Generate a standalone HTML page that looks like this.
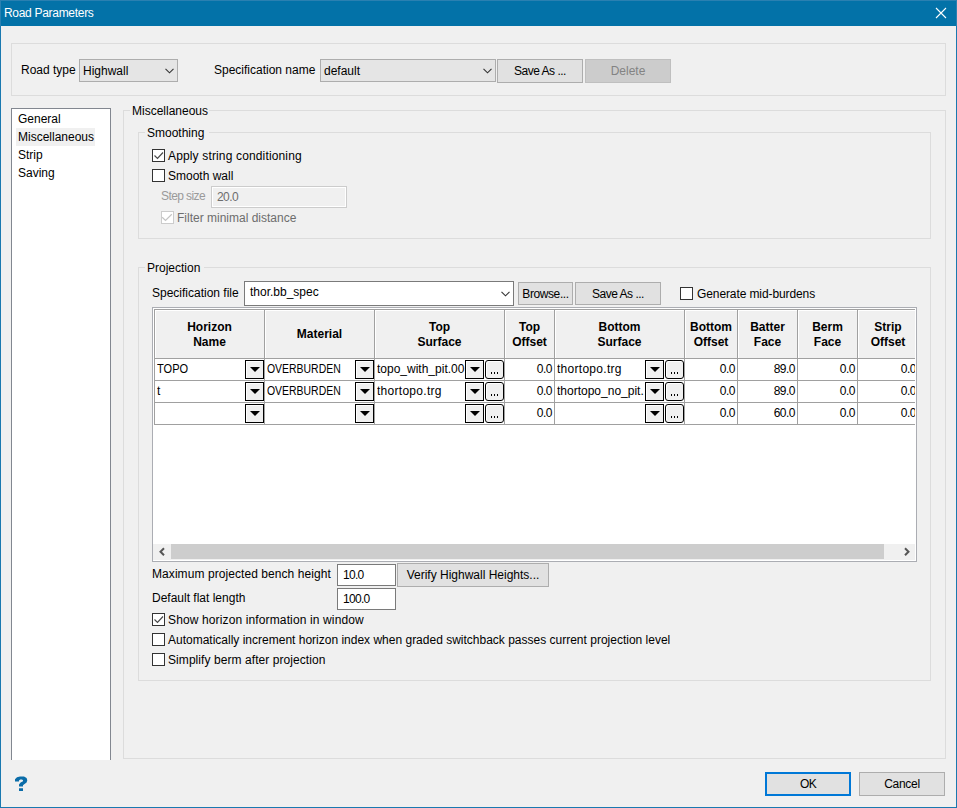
<!DOCTYPE html>
<html><head><meta charset="utf-8">
<style>
html,body{margin:0;padding:0;width:957px;height:808px;overflow:hidden;background:#f0f0f0;}
body{position:relative;font-family:"Liberation Sans",sans-serif;font-size:12px;color:#000;}
div{box-sizing:border-box;}
.a{position:absolute;}
.t{position:absolute;font-size:12px;line-height:15px;white-space:pre;}
.b{position:absolute;font-size:12px;line-height:15px;white-space:pre;font-weight:bold;}
.grp{position:absolute;border:1px solid #dcdcdc;}
.lbl{position:absolute;background:#f0f0f0;font-size:12px;line-height:15px;white-space:pre;padding:0 1px 0 2px;}
.btn{position:absolute;background:#e1e1e1;border:1px solid #adadad;font-size:12px;line-height:15px;text-align:center;white-space:pre;}
.chk{position:absolute;width:13px;height:13px;border:1px solid #333;background:#fff;}
.edit{position:absolute;background:#fff;border:1px solid #7a7a7a;}
.dd{position:absolute;width:19px;height:19px;border:1px solid #000;background:#f0f0f0;box-shadow:inset 1px 1px 0 #fff;}
.dd:after{content:"";position:absolute;left:4px;top:6px;border-left:5px solid transparent;border-right:5px solid transparent;border-top:5px solid #000;}
.br{position:absolute;width:19px;height:19px;border:1px solid #000;border-radius:3px;background:#f0f0f0;box-shadow:inset 1px 1px 0 #fff;}
.br:after{content:"";position:absolute;left:5px;top:11px;width:1px;height:2px;background:#000;box-shadow:3px 0 0 #000,6px 0 0 #000;}
</style></head>
<body>
<!-- window frame -->
<div class="a" style="left:0;top:0;width:957px;height:808px;border:1px solid #1a79b0;border-top:none;"></div>
<div class="a" style="left:0;top:0;width:957px;height:26px;background:#0372a8;border:1px solid #2a80b1;border-bottom:none;"></div>
<div class="t" style="left:4px;top:6px;color:#fff;letter-spacing:-0.3px;">Road Parameters</div>
<svg class="a" style="left:935px;top:7px" width="12" height="12" viewBox="0 0 12 12"><path d="M1 1L11 11M11 1L1 11" stroke="#fff" stroke-width="1.1"/></svg>

<!-- top group -->
<div class="grp" style="left:11px;top:43px;width:935px;height:53px;"></div>
<div class="t" style="left:21px;top:63px;">Road type</div>
<div class="a" style="left:79px;top:59px;width:99px;height:23px;background:#e5e5e5;border:1px solid #adadad;"></div>
<div class="t" style="left:83px;top:64px;">Highwall</div>
<svg class="a" style="left:165px;top:68px" width="9" height="6" viewBox="0 0 9 6"><path d="M0.5 0.8L4.5 4.8L8.5 0.8" stroke="#333" stroke-width="1.1" fill="none"/></svg>
<div class="t" style="left:214px;top:63px;">Specification name</div>
<div class="a" style="left:320px;top:59px;width:176px;height:23px;background:#e5e5e5;border:1px solid #adadad;"></div>
<div class="t" style="left:324px;top:64px;">default</div>
<svg class="a" style="left:483px;top:68px" width="9" height="6" viewBox="0 0 9 6"><path d="M0.5 0.8L4.5 4.8L8.5 0.8" stroke="#333" stroke-width="1.1" fill="none"/></svg>
<div class="btn" style="left:497px;top:59px;width:86px;height:24px;padding-top:4px;letter-spacing:-0.5px;">Save As ...</div>
<div class="btn" style="left:585px;top:59px;width:86px;height:24px;padding-top:4px;background:#cccccc;border-color:#bfbfbf;color:#838383;">Delete</div>

<!-- listbox -->
<div class="a" style="left:11px;top:108px;width:100px;height:652px;background:#fff;border:1px solid #828790;border-bottom:none;"></div>
<div class="a" style="left:16px;top:128px;width:79px;height:18px;background:#f0f0f0;"></div>
<div class="t" style="left:18px;top:112px;">General</div>
<div class="t" style="left:18px;top:130px;">Miscellaneous</div>
<div class="t" style="left:18px;top:148px;">Strip</div>
<div class="t" style="left:18px;top:166px;">Saving</div>

<!-- misc group -->
<div class="grp" style="left:123px;top:110px;width:823px;height:649px;"></div>
<div class="lbl" style="left:130px;top:104px;width:79px;">Miscellaneous</div>

<!-- smoothing group -->
<div class="grp" style="left:138px;top:132px;width:793px;height:107px;"></div>
<div class="lbl" style="left:145px;top:126px;width:64px;">Smoothing</div>

<!-- projection group -->
<div class="grp" style="left:138px;top:267px;width:793px;height:414px;"></div>
<div class="lbl" style="left:145px;top:261px;width:59px;">Projection</div>


<!-- smoothing content -->
<div class="chk" style="left:152px;top:149px;"></div>
<svg class="a" style="left:152px;top:149px" width="13" height="13" viewBox="0 0 13 13"><path d="M2.5 6.5L5.5 9.5L11 3.5" stroke="#4a4a4a" stroke-width="1.2" fill="none"/></svg>
<div class="t" style="left:168px;top:149px;letter-spacing:0.15px;">Apply string conditioning</div>
<div class="chk" style="left:152px;top:169px;"></div>
<div class="t" style="left:168px;top:169px;">Smooth wall</div>
<div class="t" style="left:161px;top:189px;color:#9a9a9a;letter-spacing:-0.6px;">Step size</div>
<div class="a" style="left:211px;top:186px;width:136px;height:22px;border:1px solid #cccccc;box-shadow:inset 0 0 0 1px #fff;"></div>
<div class="t" style="left:217px;top:190px;color:#6d6d6d;letter-spacing:-0.6px;">20.0</div>
<div class="a" style="left:161px;top:211px;width:13px;height:13px;border:1px solid #cccccc;background:#fff;"></div>
<svg class="a" style="left:161px;top:211px" width="13" height="13" viewBox="0 0 13 13"><path d="M1.2 6.3L4.5 9.4L10.8 3.2" stroke="#c4c4c4" stroke-width="1.2" fill="none"/></svg>
<div class="t" style="left:177px;top:211px;color:#6d6d6d;">Filter minimal distance</div>

<!-- projection content -->
<div class="t" style="left:152px;top:286px;">Specification file</div>
<div class="edit" style="left:244px;top:281px;width:270px;height:25px;"></div>
<div class="t" style="left:250px;top:285px;">thor.bb_spec</div>
<svg class="a" style="left:501px;top:291px" width="9" height="6" viewBox="0 0 9 6"><path d="M0.5 0.8L4.5 4.8L8.5 0.8" stroke="#333" stroke-width="1.1" fill="none"/></svg>
<div class="btn" style="left:518px;top:282px;width:55px;height:23px;padding-top:4px;letter-spacing:-0.4px;">Browse...</div>
<div class="btn" style="left:575px;top:282px;width:86px;height:23px;padding-top:4px;letter-spacing:-0.5px;">Save As ...</div>
<div class="chk" style="left:680px;top:287px;"></div>
<div class="t" style="left:697px;top:287px;letter-spacing:-0.1px;">Generate mid-burdens</div>

<!-- table -->
<div class="a" style="left:152px;top:307px;width:765px;height:255px;border:1px solid #abadb3;background:#fff;"></div>
<div class="a" style="left:153px;top:308px;width:762px;height:252px;overflow:hidden;">
<div class="a" style="left:1px;top:1px;width:765px;height:50px;background:#f0f0f0;border-top:1px solid #a0a0a0;border-left:1px solid #a0a0a0;border-bottom:1px solid #a0a0a0;"></div>
<div class="a" style="left:2px;top:2px;width:109px;height:1px;background:#fff;"></div>
<div class="a" style="left:2px;top:2px;width:1px;height:48px;background:#fff;"></div>
<div class="a" style="left:111px;top:1px;width:1px;height:116px;background:#a0a0a0;"></div>
<div class="b" style="left:1px;top:12px;width:111px;text-align:center;">Horizon<br>Name</div>
<div class="a" style="left:112px;top:2px;width:109px;height:1px;background:#fff;"></div>
<div class="a" style="left:112px;top:2px;width:1px;height:48px;background:#fff;"></div>
<div class="a" style="left:221px;top:1px;width:1px;height:116px;background:#a0a0a0;"></div>
<div class="b" style="left:111px;top:19px;width:111px;text-align:center;">Material</div>
<div class="a" style="left:222px;top:2px;width:129px;height:1px;background:#fff;"></div>
<div class="a" style="left:222px;top:2px;width:1px;height:48px;background:#fff;"></div>
<div class="a" style="left:351px;top:1px;width:1px;height:116px;background:#a0a0a0;"></div>
<div class="b" style="left:221px;top:12px;width:131px;text-align:center;">Top<br>Surface</div>
<div class="a" style="left:352px;top:2px;width:49px;height:1px;background:#fff;"></div>
<div class="a" style="left:352px;top:2px;width:1px;height:48px;background:#fff;"></div>
<div class="a" style="left:401px;top:1px;width:1px;height:116px;background:#a0a0a0;"></div>
<div class="b" style="left:351px;top:12px;width:51px;text-align:center;">Top<br>Offset</div>
<div class="a" style="left:402px;top:2px;width:129px;height:1px;background:#fff;"></div>
<div class="a" style="left:402px;top:2px;width:1px;height:48px;background:#fff;"></div>
<div class="a" style="left:531px;top:1px;width:1px;height:116px;background:#a0a0a0;"></div>
<div class="b" style="left:401px;top:12px;width:131px;text-align:center;">Bottom<br>Surface</div>
<div class="a" style="left:532px;top:2px;width:52px;height:1px;background:#fff;"></div>
<div class="a" style="left:532px;top:2px;width:1px;height:48px;background:#fff;"></div>
<div class="a" style="left:584px;top:1px;width:1px;height:116px;background:#a0a0a0;"></div>
<div class="b" style="left:531px;top:12px;width:54px;text-align:center;">Bottom<br>Offset</div>
<div class="a" style="left:585px;top:2px;width:59px;height:1px;background:#fff;"></div>
<div class="a" style="left:585px;top:2px;width:1px;height:48px;background:#fff;"></div>
<div class="a" style="left:644px;top:1px;width:1px;height:116px;background:#a0a0a0;"></div>
<div class="b" style="left:584px;top:12px;width:61px;text-align:center;">Batter<br>Face</div>
<div class="a" style="left:645px;top:2px;width:59px;height:1px;background:#fff;"></div>
<div class="a" style="left:645px;top:2px;width:1px;height:48px;background:#fff;"></div>
<div class="a" style="left:704px;top:1px;width:1px;height:116px;background:#a0a0a0;"></div>
<div class="b" style="left:644px;top:12px;width:61px;text-align:center;">Berm<br>Face</div>
<div class="a" style="left:705px;top:2px;width:60px;height:1px;background:#fff;"></div>
<div class="a" style="left:705px;top:2px;width:1px;height:48px;background:#fff;"></div>
<div class="a" style="left:765px;top:1px;width:1px;height:116px;background:#a0a0a0;"></div>
<div class="b" style="left:704px;top:12px;width:62px;text-align:center;">Strip<br>Offset</div>
<div class="a" style="left:1px;top:1px;width:1px;height:116px;background:#a0a0a0;"></div>
<div class="a" style="left:1px;top:72px;width:765px;height:1px;background:#a0a0a0;"></div>
<div class="a" style="left:1px;top:94px;width:765px;height:1px;background:#a0a0a0;"></div>
<div class="a" style="left:1px;top:116px;width:765px;height:1px;background:#a0a0a0;"></div>
<div class="t" style="left:4px;top:54px;width:88px;overflow:hidden;letter-spacing:0px;"><span style="display:inline-block;transform:scaleX(0.92);transform-origin:0 0;">TOPO</span></div>
<div class="dd" style="left:92px;top:52px;"></div>
<div class="t" style="left:114px;top:54px;width:88px;overflow:hidden;letter-spacing:0px;"><span style="display:inline-block;transform:scaleX(0.87);transform-origin:0 0;">OVERBURDEN</span></div>
<div class="dd" style="left:202px;top:52px;"></div>
<div class="t" style="left:224px;top:54px;width:88px;overflow:hidden;letter-spacing:0px;"><span style="display:inline-block;transform:scaleX(1);transform-origin:0 0;">topo_with_pit.00</span></div>
<div class="dd" style="left:312px;top:52px;"></div>
<div class="br" style="left:332px;top:52px;"></div>
<div class="t" style="left:351px;top:54px;width:48px;text-align:right;letter-spacing:-0.5px;">0.0</div>
<div class="t" style="left:404px;top:54px;width:88px;overflow:hidden;letter-spacing:0.28px;"><span style="display:inline-block;transform:scaleX(1);transform-origin:0 0;">thortopo.trg</span></div>
<div class="dd" style="left:492px;top:52px;"></div>
<div class="br" style="left:512px;top:52px;"></div>
<div class="t" style="left:531px;top:54px;width:51px;text-align:right;letter-spacing:-0.5px;">0.0</div>
<div class="t" style="left:584px;top:54px;width:58px;text-align:right;letter-spacing:-0.5px;">89.0</div>
<div class="t" style="left:644px;top:54px;width:58px;text-align:right;letter-spacing:-0.5px;">0.0</div>
<div class="t" style="left:704px;top:54px;width:59px;text-align:right;letter-spacing:-0.5px;">0.0</div>
<div class="t" style="left:4px;top:76px;width:88px;overflow:hidden;letter-spacing:0px;"><span style="display:inline-block;transform:scaleX(1);transform-origin:0 0;">t</span></div>
<div class="dd" style="left:92px;top:74px;"></div>
<div class="t" style="left:114px;top:76px;width:88px;overflow:hidden;letter-spacing:0px;"><span style="display:inline-block;transform:scaleX(0.87);transform-origin:0 0;">OVERBURDEN</span></div>
<div class="dd" style="left:202px;top:74px;"></div>
<div class="t" style="left:224px;top:76px;width:88px;overflow:hidden;letter-spacing:0.28px;"><span style="display:inline-block;transform:scaleX(1);transform-origin:0 0;">thortopo.trg</span></div>
<div class="dd" style="left:312px;top:74px;"></div>
<div class="br" style="left:332px;top:74px;"></div>
<div class="t" style="left:351px;top:76px;width:48px;text-align:right;letter-spacing:-0.5px;">0.0</div>
<div class="t" style="left:404px;top:76px;width:88px;overflow:hidden;letter-spacing:0px;"><span style="display:inline-block;transform:scaleX(1);transform-origin:0 0;">thortopo_no_pit.</span></div>
<div class="dd" style="left:492px;top:74px;"></div>
<div class="br" style="left:512px;top:74px;"></div>
<div class="t" style="left:531px;top:76px;width:51px;text-align:right;letter-spacing:-0.5px;">0.0</div>
<div class="t" style="left:584px;top:76px;width:58px;text-align:right;letter-spacing:-0.5px;">89.0</div>
<div class="t" style="left:644px;top:76px;width:58px;text-align:right;letter-spacing:-0.5px;">0.0</div>
<div class="t" style="left:704px;top:76px;width:59px;text-align:right;letter-spacing:-0.5px;">0.0</div>
<div class="dd" style="left:92px;top:96px;"></div>
<div class="dd" style="left:202px;top:96px;"></div>
<div class="dd" style="left:312px;top:96px;"></div>
<div class="br" style="left:332px;top:96px;"></div>
<div class="t" style="left:351px;top:98px;width:48px;text-align:right;letter-spacing:-0.5px;">0.0</div>
<div class="dd" style="left:492px;top:96px;"></div>
<div class="br" style="left:512px;top:96px;"></div>
<div class="t" style="left:531px;top:98px;width:51px;text-align:right;letter-spacing:-0.5px;">0.0</div>
<div class="t" style="left:584px;top:98px;width:58px;text-align:right;letter-spacing:-0.5px;">60.0</div>
<div class="t" style="left:644px;top:98px;width:58px;text-align:right;letter-spacing:-0.5px;">0.0</div>
<div class="t" style="left:704px;top:98px;width:59px;text-align:right;letter-spacing:-0.5px;">0.0</div>
<div class="a" style="left:0px;top:236px;width:762px;height:17px;background:#f0f0f0;"></div>
<div class="a" style="left:18px;top:236px;width:713px;height:15px;background:#cdcdcd;"></div>
<svg class="a" style="left:5px;top:239px" width="9" height="10" viewBox="0 0 9 10"><path d="M6 1.2L2.5 4.7L6 8.2" stroke="#555" stroke-width="2" fill="none"/></svg>
<svg class="a" style="left:749px;top:239px" width="9" height="10" viewBox="0 0 9 10"><path d="M3 1.2L6.5 4.7L3 8.2" stroke="#555" stroke-width="2" fill="none"/></svg>
</div>
<!-- /table -->


<!-- projection bottom -->
<div class="t" style="left:152px;top:567px;letter-spacing:0.07px;">Maximum projected bench height</div>
<div class="t" style="left:152px;top:591px;">Default flat length</div>
<div class="edit" style="left:337px;top:564px;width:59px;height:22px;"></div>
<div class="t" style="left:343px;top:568px;letter-spacing:-0.7px;">10.0</div>
<div class="edit" style="left:337px;top:588px;width:59px;height:22px;"></div>
<div class="t" style="left:343px;top:592px;letter-spacing:-0.7px;">100.0</div>
<div class="btn" style="left:397px;top:563px;width:152px;height:24px;padding-top:4px;">Verify Highwall Heights...</div>
<div class="chk" style="left:152px;top:613px;"></div>
<svg class="a" style="left:152px;top:613px" width="13" height="13" viewBox="0 0 13 13"><path d="M2.5 6.5L5.5 9.5L11 3.5" stroke="#4a4a4a" stroke-width="1.2" fill="none"/></svg>
<div class="t" style="left:168px;top:613px;letter-spacing:0.13px;">Show horizon information in window</div>
<div class="chk" style="left:152px;top:633px;"></div>
<div class="t" style="left:168px;top:633px;">Automatically increment horizon index when graded switchback passes current projection level</div>
<div class="chk" style="left:152px;top:653px;"></div>
<div class="t" style="left:168px;top:653px;letter-spacing:0.07px;">Simplify berm after projection</div>

<!-- bottom -->
<svg class="a" style="left:14px;top:776px" width="15" height="16" viewBox="0 0 15 16"><path d="M1 5.6L1 3.2L3 1.2L6 0.6L10 0.6L12.6 2L13.3 4.2L12.6 6.6L10.2 8.2L9 9.2L9 10.6L5 10.6L5 8.6L6.6 6.6L9 5.2L9 4.2L8 3.6L6.2 3.6L5 4.6L5 5.6Z M5 12.2H9V15H5Z" fill="#0a6ca8"/></svg>
<div class="btn" style="left:765px;top:772px;width:86px;height:24px;border:2px solid #0078d7;padding-top:3px;letter-spacing:-0.6px;">OK</div>
<div class="btn" style="left:859px;top:772px;width:86px;height:24px;padding-top:4px;letter-spacing:-0.3px;">Cancel</div>
</body></html>
